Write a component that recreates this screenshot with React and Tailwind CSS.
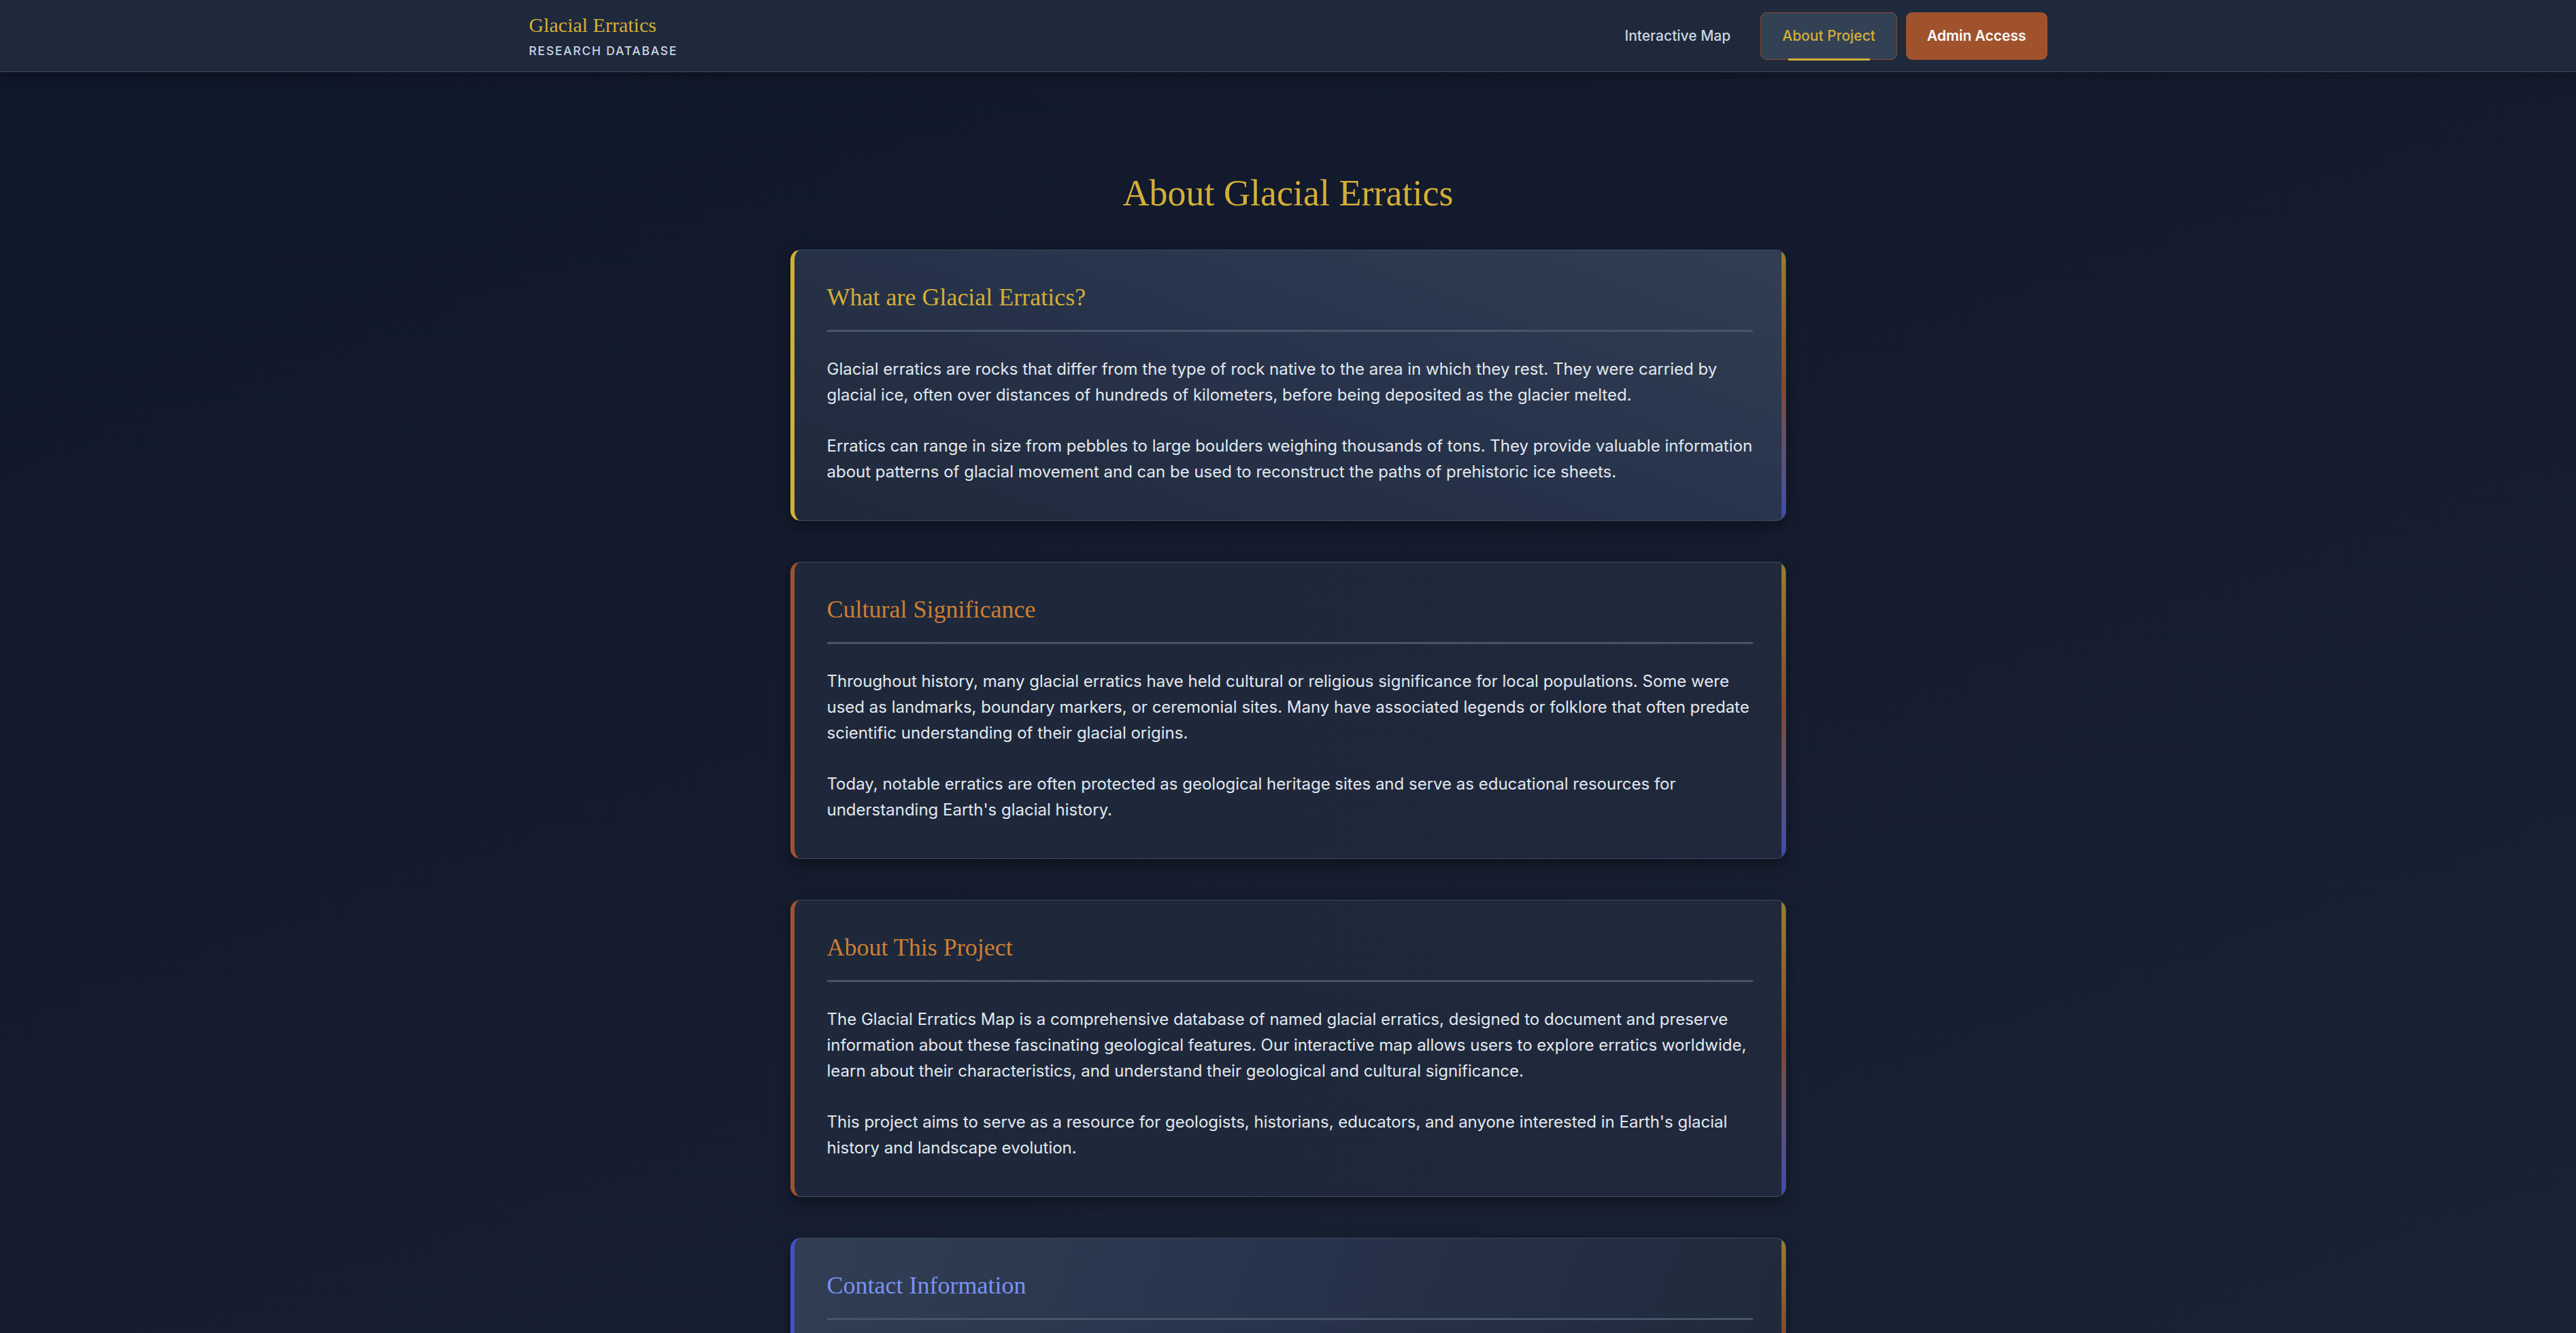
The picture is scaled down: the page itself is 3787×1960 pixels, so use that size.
import React from "react";

const serif = "font-['Liberation_Serif',serif]";

const sections = [
  {
    title: "What are Glacial Erratics?",
    titleColor: "text-[#d4af37]",
    leftBorder: "border-l-[#d4af37]",
    bg: "bg-[linear-gradient(20deg,#1f293b_0%,#27334a_50%,#313e53_100%)]",
    paragraphs: [
      "Glacial erratics are rocks that differ from the type of rock native to the area in which they rest. They were carried by glacial ice, often over distances of hundreds of kilometers, before being deposited as the glacier melted.",
      "Erratics can range in size from pebbles to large boulders weighing thousands of tons. They provide valuable information about patterns of glacial movement and can be used to reconstruct the paths of prehistoric ice sheets.",
    ],
  },
  {
    title: "Cultural Significance",
    titleColor: "text-[#cd7f32]",
    leftBorder: "border-l-[#a0522d]",
    bg: "bg-[linear-gradient(90deg,#1e283a_0%,#20293c_100%)]",
    paragraphs: [
      "Throughout history, many glacial erratics have held cultural or religious significance for local populations. Some were used as landmarks, boundary markers, or ceremonial sites. Many have associated legends or folklore that often predate scientific understanding of their glacial origins.",
      "Today, notable erratics are often protected as geological heritage sites and serve as educational resources for understanding Earth's glacial history.",
    ],
  },
  {
    title: "About This Project",
    titleColor: "text-[#cd7f32]",
    leftBorder: "border-l-[#a0522d]",
    bg: "bg-[linear-gradient(90deg,#1e283a_0%,#20293c_100%)]",
    paragraphs: [
      "The Glacial Erratics Map is a comprehensive database of named glacial erratics, designed to document and preserve information about these fascinating geological features. Our interactive map allows users to explore erratics worldwide, learn about their characteristics, and understand their geological and cultural significance.",
      "This project aims to serve as a resource for geologists, historians, educators, and anyone interested in Earth's glacial history and landscape evolution.",
    ],
  },
  {
    title: "Contact Information",
    titleColor: "text-[#7b91f2]",
    leftBorder: "border-l-[#4052c8]",
    bg: "bg-[linear-gradient(110deg,#313e53_0%,#27334a_50%,#1f293b_100%)]",
    paragraphs: [
      "For questions, corrections, or to suggest additional erratics for the database, please reach out to the research team. We welcome contributions from researchers and enthusiasts alike.",
    ],
  },
];

const Header = () => (
  <header className="h-[106px] bg-[#1e293b] border-b border-[#3b4a5f] shadow-[0_4px_14px_rgba(0,0,0,0.35)]">
    <div className="w-[2232px] mx-auto h-full flex items-center justify-between">
      <div className="flex flex-col">
        <span className={`${serif} text-[30px] leading-[36px] text-[#d4af37]`}>Glacial Erratics</span>
        <span className="mt-[8px] text-[17.5px] leading-[24px] tracking-[0.1em] font-medium text-[#cbd5e1] uppercase">
          Research Database
        </span>
      </div>
      <nav className="flex items-center gap-[13px]">
        <a className="h-[70px] px-[31px] flex items-center rounded-[9px] text-[21px] font-medium text-[#cbd5e1]">
          Interactive Map
        </a>
        <a className="relative h-[70px] px-[31px] flex items-center rounded-[9px] bg-[#334155] border border-[#8a4a2c] text-[21px] font-medium text-[#d4af37]">
          About Project
          <span className="absolute bottom-[-2px] left-1/2 -translate-x-1/2 w-[120px] h-[3px] bg-[#d4af37]" />
        </a>
        <a className="h-[70px] px-[31px] flex items-center rounded-[9px] bg-[#a0522d] text-[21px] font-semibold text-white">
          Admin Access
        </a>
      </nav>
    </div>
  </header>
);

const SectionCard = ({ section }) => (
  <section
    className={`relative overflow-hidden rounded-[15px] border border-[#3e4c61] border-l-[6px] ${section.leftBorder} ${section.bg} pt-[48px] pb-[51px] pl-[48px] pr-[48px] shadow-[0_8px_22px_rgba(0,0,0,0.4)]`}
  >
    <span className="absolute right-0 top-0 bottom-0 w-[6px] bg-gradient-to-b from-[#9a7e30] via-[#7d4a32] to-[#3f4ab0]" />
    <h2
      className={`${serif} text-[36px] leading-[43px] ${section.titleColor} pb-[26px] border-b-[3px] border-[#475569] mb-[36px]`}
    >
      {section.title}
    </h2>
    <div className="flex flex-col gap-[36px]">
      {section.paragraphs.map((p, i) => (
        <p key={i} className="text-[24px] leading-[38.4px] text-[#e2e8f0]">
          {p}
        </p>
      ))}
    </div>
  </section>
);

export default function App() {
  return (
    <div className="min-h-screen font-['Inter',sans-serif] bg-[linear-gradient(160deg,#0f172a_0%,#141c2e_45%,#1b2437_100%)]">
      <Header />
      <main className="pt-[146px] pb-[96px]">
        <h1 className={`${serif} text-center text-[54px] leading-[65px] text-[#d4af37] mb-[50px]`}>
          About Glacial Erratics
        </h1>
        <div className="w-[1464px] mx-auto flex flex-col gap-[60px]">
          {sections.map((s) => (
            <SectionCard key={s.title} section={s} />
          ))}
        </div>
      </main>
    </div>
  );
}
